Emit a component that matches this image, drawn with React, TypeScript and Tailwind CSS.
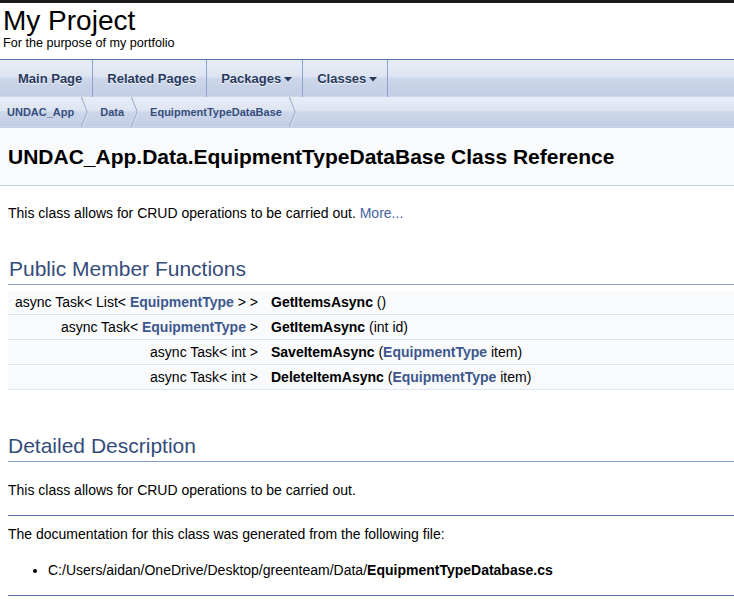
import { ReactNode } from 'react';

const tabBg =
  'bg-[linear-gradient(to_bottom,#e9edf6_0%,#dde4f1_45%,#cdd7ea_50%,#c2cee6_95%,#d2dbed_100%)]';

function Tab({ label, menu, first }: { label: string; menu?: boolean; first?: boolean }) {
  return (
    <div
      className={`flex items-center h-full pr-[10px] border-r border-[#8ea3cc] text-[13px] font-bold text-[#283a5d] [text-shadow:0_1px_1px_rgba(255,255,255,0.9)] ${
        first ? 'pl-[18px]' : 'pl-[14px]'
      }`}
    >
      {label}
      {menu && (
        <svg width="8" height="5" viewBox="0 0 8 5" className="ml-[3px] mt-[1px]">
          <path d="M0 0 L8 0 L4 4.5 Z" fill="#283a5d" />
        </svg>
      )}
    </div>
  );
}

function Crumb({ label, first }: { label: string; first?: boolean }) {
  return (
    <div className="flex items-center h-full">
      <span className={`pr-[7px] text-[11px] font-bold text-[#364d7c] ${first ? 'pl-[7px]' : 'pl-[11px]'}`}>
        {label}
      </span>
      <svg width="8" height="30" viewBox="0 0 8 30" className="block">
        <path d="M0.5 0 L6.5 15 L0.5 30" fill="none" stroke="#9fb1d5" strokeWidth="1.3" />
        <path d="M1.5 0 L7.5 15 L1.5 30" fill="none" stroke="#ffffff" strokeWidth="0.8" opacity="0.6" />
      </svg>
    </div>
  );
}

const link = 'font-bold text-[#3d578c]';

function Row({ left, right }: { left: ReactNode; right: ReactNode }) {
  return (
    <div className="flex h-[25px] items-center bg-[#f9fafc] border-b border-[#dee4f0] shadow-[inset_0_1px_0_#ffffff]">
      <div className="w-[250px] text-right whitespace-nowrap">{left}</div>
      <div className="pl-[13px] whitespace-nowrap">{right}</div>
    </div>
  );
}

export default function App() {
  return (
    <div className="w-[734px] h-[609px] overflow-hidden bg-white border-t-[3px] border-[#1a1a1a] font-['Liberation_Sans',Arial,sans-serif] text-black">
      {/* title */}
      <div className="pl-[3px] h-[57px] border-b border-[#5373b4]">
        <div className="text-[28px] leading-[30px] pt-[3px]">My Project</div>
        <div className="text-[12.6px] leading-[15px]">For the purpose of my portfolio</div>
      </div>

      {/* tabs */}
      <div className={`h-[37px] flex ${tabBg}`}>
        <Tab label="Main Page" first />
        <Tab label="Related Pages" />
        <Tab label="Packages" menu />
        <Tab label="Classes" menu />
      </div>

      {/* breadcrumb */}
      <div className={`h-[31px] flex ${tabBg} border-b border-[#c4cfe5]`}>
        <Crumb label="UNDAC_App" first />
        <Crumb label="Data" />
        <Crumb label="EquipmentTypeDataBase" />
      </div>

      {/* header */}
      <div className="h-[58px] flex items-center px-[8px] bg-[#f9fafc] border-b border-[#c4cfe5]">
        <h1 className="text-[21px] font-bold">UNDAC_App.Data.EquipmentTypeDataBase Class Reference</h1>
      </div>

      <div className="px-[8px] text-[14px]">
        <p className="mt-[17px]">
          This class allows for CRUD operations to be carried out. <span className="text-[#4665a2]">More...</span>
        </p>

        <h2 className="mt-[31px] -mr-[8px] text-[21px] text-[#354c7b] border-b border-[#879ecb] leading-[28px] pb-[1px] pl-[1px]">
          Public Member Functions
        </h2>
        <div className="mt-[5px] -mr-[8px] text-[14px]">
          <Row
            left={<>async Task&lt; List&lt; <span className={link}>EquipmentType</span> &gt; &gt;</>}
            right={<><b>GetItemsAsync</b> ()</>}
          />
          <Row
            left={<>async Task&lt; <span className={link}>EquipmentType</span> &gt;</>}
            right={<><b>GetItemAsync</b> (int id)</>}
          />
          <Row
            left={<>async Task&lt; int &gt;</>}
            right={<><b>SaveItemAsync</b> (<span className={link}>EquipmentType</span> item)</>}
          />
          <Row
            left={<>async Task&lt; int &gt;</>}
            right={<><b>DeleteItemAsync</b> (<span className={link}>EquipmentType</span> item)</>}
          />
        </div>

        <h2 className="mt-[42px] -mr-[8px] text-[21px] text-[#354c7b] border-b border-[#879ecb] leading-[28px] pb-[1px]">
          Detailed Description
        </h2>
        <p className="mt-[18px]">This class allows for CRUD operations to be carried out.</p>
        <div className="mt-[14px] border-t border-[#4a6aaa] -mr-[8px]" />
        <p className="mt-[8px]">The documentation for this class was generated from the following file:</p>
        <ul className="mt-[15px] ml-[40px] list-disc">
          <li>
            C:/Users/aidan/OneDrive/Desktop/greenteam/Data/<b>EquipmentTypeDatabase.cs</b>
          </li>
        </ul>
        <div className="mt-[14px] border-t border-[#4a6aaa] -mr-[8px]" />
      </div>
    </div>
  );
}
